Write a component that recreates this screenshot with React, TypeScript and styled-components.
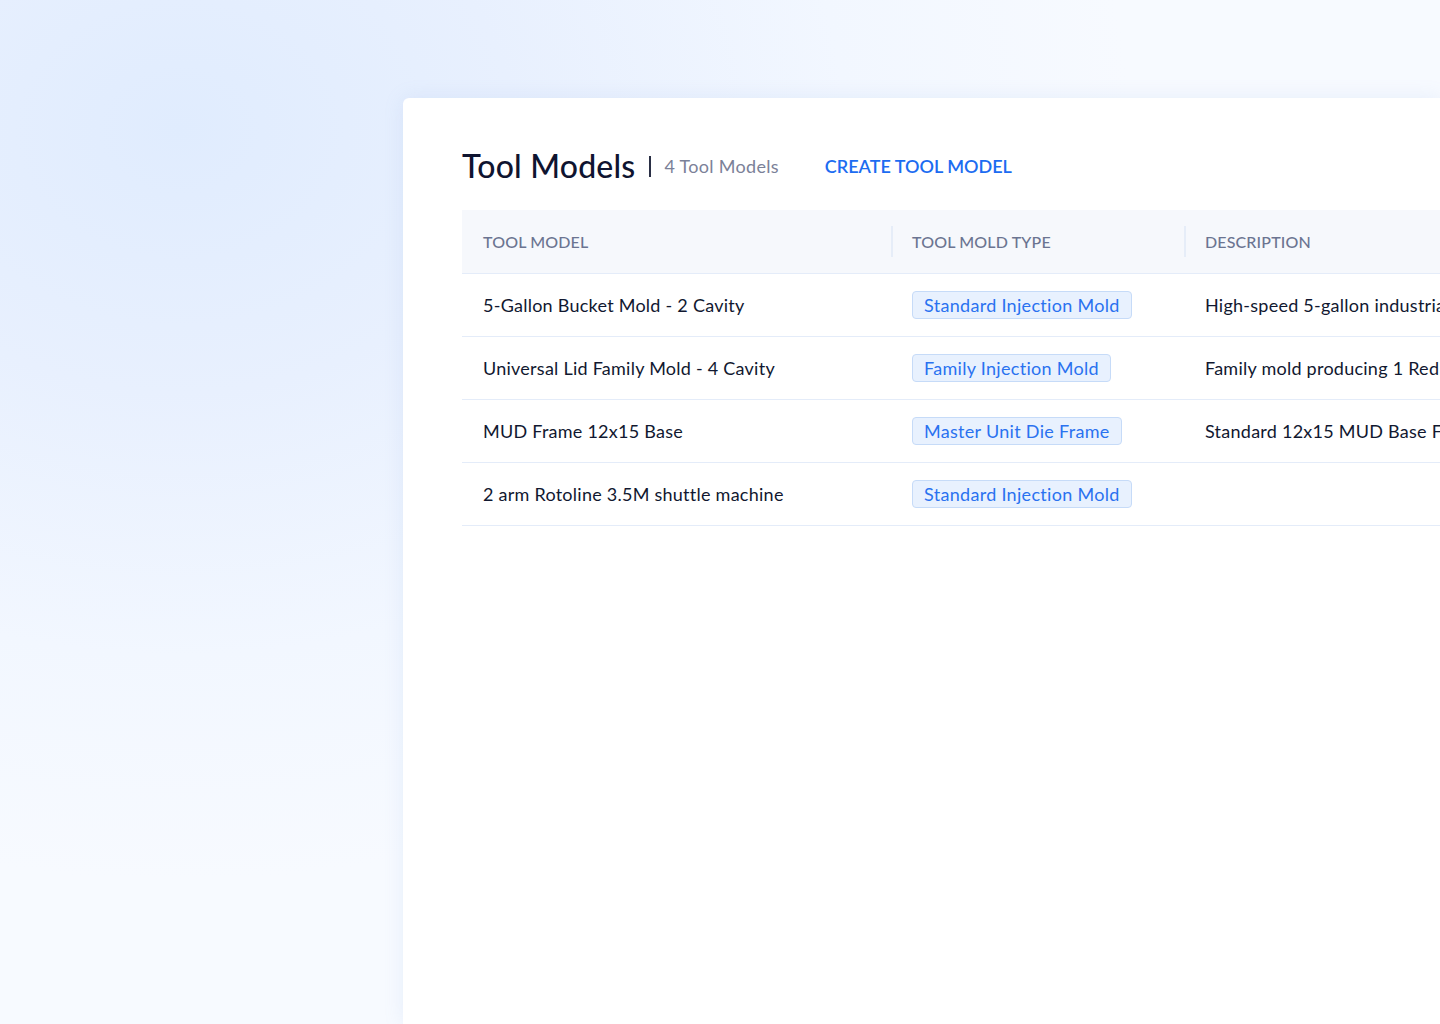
import styled, { createGlobalStyle } from 'styled-components';

const GlobalStyle = createGlobalStyle`
   html, body {
      margin: 0;
      padding: 0;
      height: 100%;
   }
   body {
      font-family: 'Lato', 'Noto Sans', sans-serif;
      color: #141a33;
   }
   #root {
      height: 100%;
   }
`;

const Page = styled.div`
   height: 1024px;
   width: 1440px;
   overflow: hidden;
   background:
      radial-gradient(ellipse 950px 750px at 180px 130px, #e0ecfe 0%, #e8f0fe 35%, #f2f7ff 70%, rgba(247, 250, 255, 0) 100%),
      #f7faff;
   padding: 98px 0 0 403px;
   box-sizing: border-box;
`;

const Card = styled.main`
   width: 1037px;
   height: 100%;
   overflow: hidden;
   background: #ffffff;
   border-top-left-radius: 6px;
   box-shadow: 0 0 20px rgba(130, 160, 220, 0.14);
   padding: 47px 0 0 59px;
   box-sizing: border-box;
`;

const Header = styled.header`
   display: flex;
   align-items: center;
   height: 40px;
`;

const Title = styled.h1`
   margin: 0;
   font-size: 32px;
   font-weight: 500;
   color: #0f1430;
   letter-spacing: 0.2px;
`;

const Divider = styled.span`
   width: 2px;
   height: 21px;
   background: #2a2f45;
   margin: 0 13px 0 14px;
   position: relative;
   top: 1px;
`;

const Count = styled.span`
   font-size: 18px;
   color: #7b8198;
   letter-spacing: 0.3px;
   position: relative;
   top: 1px;
`;

const CreateLink = styled.a`
   margin-left: 46px;
   font-size: 18px;
   font-weight: 600;
   color: #1c6cf1;
   text-decoration: none;
   position: relative;
   top: 1px;
   cursor: pointer;
`;

const Table = styled.div`
   margin-top: 25px;
   display: grid;
   grid-template-columns: 429px 293px 1fr;
`;

const HeadCell = styled.div<{ $divider?: boolean }>`
   height: 64px;
   background: #f6f8fc;
   border-bottom: 1px solid #e4ecf9;
   display: flex;
   align-items: center;
   padding-left: 21px;
   font-size: 16px;
   font-weight: 500;
   color: #6b7491;
   letter-spacing: 0.15px;
   text-transform: uppercase;
   box-sizing: border-box;
   position: relative;

   &::before {
      content: '';
      display: ${(p) => (p.$divider ? 'block' : 'none')};
      position: absolute;
      left: 0;
      top: 16px;
      bottom: 16px;
      width: 2px;
      background: #e6edf8;
   }
`;

const Cell = styled.div`
   height: 63px;
   border-bottom: 1px solid #e4ecf9;
   display: flex;
   align-items: center;
   padding-left: 21px;
   font-size: 18px;
   letter-spacing: 0.25px;
   color: #111830;
   white-space: nowrap;
   overflow: hidden;
   box-sizing: border-box;
`;

const Badge = styled.span`
   display: inline-flex;
   align-items: center;
   height: 28px;
   padding: 0 11px;
   background: #e8f1fe;
   border: 1px solid #c6dbf8;
   border-radius: 4px;
   color: #2a72f0;
   font-size: 18px;
   letter-spacing: 0.3px;
   box-sizing: border-box;
`;

const rows = [
   {
      name: '5-Gallon Bucket Mold - 2 Cavity',
      type: 'Standard Injection Mold',
      description: 'High-speed 5-gallon industrial bucket mold with hot runner system',
   },
   {
      name: 'Universal Lid Family Mold - 4 Cavity',
      type: 'Family Injection Mold',
      description: 'Family mold producing 1 Red and 3 Blue lids per cycle',
   },
   {
      name: 'MUD Frame 12x15 Base',
      type: 'Master Unit Die Frame',
      description: 'Standard 12x15 MUD Base Frame for quick change inserts',
   },
   {
      name: '2 arm Rotoline 3.5M shuttle machine',
      type: 'Standard Injection Mold',
      description: '',
   },
];

const App = () => {
   return (
      <>
         <GlobalStyle />
         <Page>
            <Card>
               <Header>
                  <Title>Tool Models</Title>
                  <Divider />
                  <Count>4 Tool Models</Count>
                  <CreateLink>CREATE TOOL MODEL</CreateLink>
               </Header>
               <Table>
                  <HeadCell>Tool Model</HeadCell>
                  <HeadCell $divider>Tool Mold Type</HeadCell>
                  <HeadCell $divider>Description</HeadCell>
                  {rows.map((row) => (
                     <>
                        <Cell key={row.name + '-n'}>{row.name}</Cell>
                        <Cell key={row.name + '-t'}>
                           <Badge>{row.type}</Badge>
                        </Cell>
                        <Cell key={row.name + '-d'}>{row.description}</Cell>
                     </>
                  ))}
               </Table>
            </Card>
         </Page>
      </>
   );
};

export default App;
